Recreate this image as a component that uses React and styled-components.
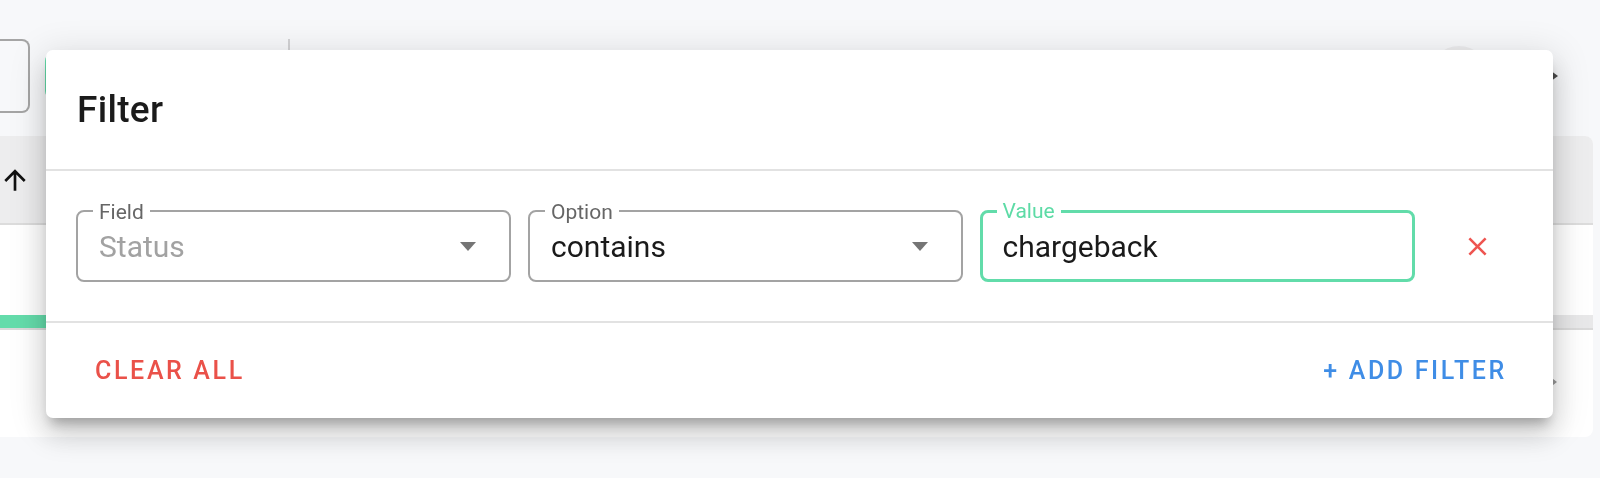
import React from 'react';
import styled, { createGlobalStyle } from 'styled-components';

// 배경 페이지(툴바 + 테이블) 위에 필터 다이얼로그가 떠 있는 화면
const GlobalStyle = createGlobalStyle`
  html, body {
    margin: 0;
    padding: 0;
    background: #f7f8fa;
    font-family: Roboto, "Noto Sans", "Liberation Sans", sans-serif;
    overflow: hidden;
  }
`;

const filters = [
  { id: 'field', label: 'Field', value: 'Status', select: true, muted: true },
  { id: 'option', label: 'Option', value: 'contains', select: true },
  { id: 'value', label: 'Value', value: 'chargeback', focused: true },
];

function App() {
  return (
    <>
      <GlobalStyle />
      <Page>
        <Toolbar>
          <EdgeButton />
          <GreenChip />
          <ToolbarDivider />
          <Spacer />
          <CircleButton />
          <PlayArrow width="12" height="16" viewBox="0 0 12 16">
            <polygon points="0,0 11,8 0,16" fill="#4a4a4a" />
          </PlayArrow>
        </Toolbar>

        <Table>
          <TableHead>
            <SortIcon viewBox="0 0 24 24">
              <path d="M4 12l1.41 1.41L11 7.83V20h2V7.83l5.58 5.59L20 12l-8-8-8 8z" fill="#111" />
            </SortIcon>
          </TableHead>
          <TableRow />
          <Progress>
            <ProgressFill style={{ width: '45%' }} />
          </Progress>
          <TableFooter>
            <svg width="10" height="14" viewBox="0 0 10 14">
              <polygon points="0,0 9,7 0,14" fill="#9a9a9a" />
            </svg>
          </TableFooter>
        </Table>
      </Page>

      <Overlay>
        <Dialog>
          <DialogHeader>
            <DialogTitle>Filter</DialogTitle>
          </DialogHeader>
          <Divider />
          <DialogContent>
            <FieldRow>
              {filters.map((f) => (
                <Outlined key={f.id} $focused={f.focused}>
                  <FloatLabel $focused={f.focused}>{f.label}</FloatLabel>
                  <InputText $muted={f.muted}>{f.value}</InputText>
                  {f.select && (
                    <DropArrow width="16" height="9" viewBox="0 0 16 9">
                      <polygon points="0,0 16,0 8,9" fill="#757575" />
                    </DropArrow>
                  )}
                </Outlined>
              ))}
              <RemoveButton aria-label="remove">
                <svg width="31" height="31" viewBox="0 0 24 24">
                  <path
                    d="M19 6.41 17.59 5 12 10.59 6.41 5 5 6.41 10.59 12 5 17.59 6.41 19 12 13.41 17.59 19 19 17.59 13.41 12z"
                    fill="#ee5450"
                  />
                </svg>
              </RemoveButton>
            </FieldRow>
          </DialogContent>
          <Divider />
          <DialogFooter>
            <TextButton $color="#ea5149">Clear all</TextButton>
            <TextButton $color="#3f8de6">+ Add filter</TextButton>
          </DialogFooter>
        </Dialog>
      </Overlay>
    </>
  );
}

// 배경 페이지
const Page = styled.div`
  height: 478px;
  padding-top: 39px;
  box-sizing: border-box;
`;

const Toolbar = styled.div`
  display: flex;
  align-items: center;
  height: 74px;
  padding-right: 41px;
`;

const EdgeButton = styled.div`
  width: 28px;
  height: 70px;
  border: 2px solid #a5a5a5;
  border-left: none;
  border-radius: 0 8px 8px 0;
`;

const GreenChip = styled.div`
  margin-left: 15px;
  width: 196px;
  height: 42px;
  border: 2px solid #63dca9;
  border-radius: 8px;
`;

const ToolbarDivider = styled.div`
  margin-left: 43px;
  width: 2px;
  height: 74px;
  background: #d2d2d4;
`;

const Spacer = styled.div`
  flex: 1;
`;

const CircleButton = styled.div`
  width: 60px;
  height: 60px;
  border-radius: 50%;
  background: #ececee;
`;

const PlayArrow = styled.svg`
  margin-left: 58px;
`;

const Table = styled.div`
  margin-top: 23px;
  margin-right: 7px;
  height: 301px;
  background: #ffffff;
  border-radius: 0 8px 8px 0;
  overflow: hidden;
  display: flex;
  flex-direction: column;
`;

const TableHead = styled.div`
  height: 89px;
  background: #ededee;
  border-bottom: 2px solid #dcdcdc;
  display: flex;
  align-items: center;
  box-sizing: border-box;
`;

const SortIcon = styled.svg`
  width: 32px;
  height: 32px;
  margin-left: -1px;
`;

const TableRow = styled.div`
  height: 90px;
`;

const Progress = styled.div`
  height: 13px;
  background: #e8e8e9;
  border-bottom: 2px solid #dadada;
`;

const ProgressFill = styled.div`
  height: 100%;
  background: #64dcab;
`;

const TableFooter = styled.div`
  flex: 1;
  display: flex;
  align-items: center;
  justify-content: flex-end;
  padding-right: 35px;
  padding-bottom: 4px;
`;

// 다이얼로그
const Overlay = styled.div`
  position: fixed;
  inset: 0;
  display: flex;
  align-items: flex-start;
  padding: 50px 0 0 46px;
`;

const Dialog = styled.div`
  width: 1507px;
  height: 368px;
  background: #ffffff;
  border-radius: 7px;
  display: flex;
  flex-direction: column;
  box-shadow: 0 10px 12px -5px rgba(0, 0, 0, 0.25),
    0 18px 28px 2px rgba(0, 0, 0, 0.12), 0 6px 34px 6px rgba(0, 0, 0, 0.1);
`;

const DialogHeader = styled.div`
  height: 119px;
  display: flex;
  align-items: center;
  padding-left: 31px;
`;

const DialogTitle = styled.h2`
  margin: 0;
  font-size: 37px;
  font-weight: 500;
  color: #1b1b1b;
  line-height: 1;
  letter-spacing: 0.3px;
`;

const Divider = styled.div`
  height: 2px;
  background: #e2e2e2;
`;

const DialogContent = styled.div`
  height: 150px;
  display: flex;
  align-items: center;
  padding-left: 30px;
`;

const FieldRow = styled.div`
  display: flex;
  align-items: center;
  gap: 17px;
`;

const Outlined = styled.div`
  position: relative;
  width: 435px;
  height: 72px;
  box-sizing: border-box;
  border: ${(p) => (p.$focused ? '3.5px solid #62dcaa' : '2px solid #a3a3a3')};
  border-radius: 8px;
  display: flex;
  align-items: center;
  padding-left: ${(p) => (p.$focused ? '19.5px' : '21px')};
  padding-top: 2px;
`;

const FloatLabel = styled.span`
  position: absolute;
  top: ${(p) => (p.$focused ? '-12px' : '-10.5px')};
  left: ${(p) => (p.$focused ? '13.5px' : '15px')};
  padding: 0 6px;
  background: #ffffff;
  font-size: 21px;
  line-height: 21px;
  color: ${(p) => (p.$focused ? '#5ddba6' : '#666666')};
`;

const InputText = styled.span`
  flex: 1;
  font-size: 30px;
  line-height: 30px;
  color: ${(p) => (p.$muted ? '#a2a2a2' : '#1a1a1a')};
`;

const DropArrow = styled.svg`
  margin-right: 33px;
  margin-top: -1px;
`;

const RemoveButton = styled.button`
  margin-left: 14px;
  width: 62px;
  height: 62px;
  border: none;
  background: transparent;
  padding: 0;
  display: flex;
  align-items: center;
  justify-content: center;
  cursor: pointer;
`;

const DialogFooter = styled.div`
  flex: 1;
  display: flex;
  align-items: center;
  justify-content: space-between;
  padding: 0 32px 0 35px;
`;

const TextButton = styled.button`
  border: none;
  background: transparent;
  padding: 10px 14px;
  font-family: Roboto, "Liberation Sans", sans-serif;
  font-size: 25px;
  font-weight: 500;
  letter-spacing: 2.65px;
  text-transform: uppercase;
  color: ${(p) => p.$color};
  cursor: pointer;
`;

export default App;
